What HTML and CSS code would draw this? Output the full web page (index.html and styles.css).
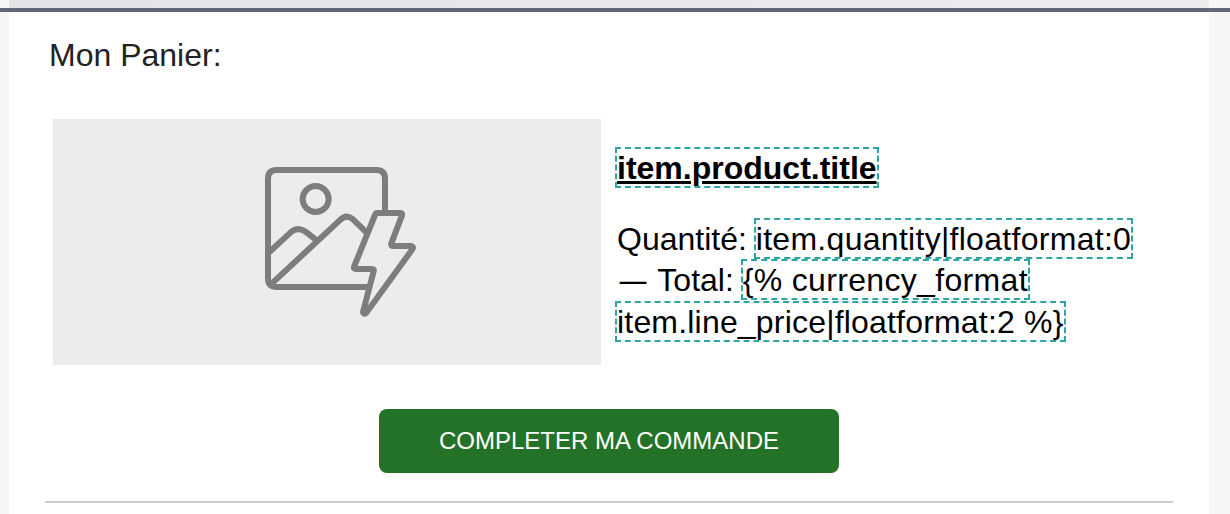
FILE: index.html
```html
<!DOCTYPE html>
<html lang="fr">

<head>
    <meta charset="UTF-8">
    <meta name="viewport" content="width=device-width, initial-scale=1.0">
    <title>Mon Panier</title>
    <link rel="stylesheet" href="styles.css">
</head>

<body>
    <div class="top-strip"></div>
    <div class="divider-bar"></div>
    <div class="panel">
        <h1>Mon Panier:</h1>
        <div class="item">
            <div class="item-image">
                <svg viewBox="0 0 540 540" width="180" height="180">
                    <g fill="none" stroke="#7c7d7e" stroke-width="18" stroke-linejoin="round">
                        <path d="M405 184V86Q405 60 379 60H80Q54 60 54 86V385Q54 411 80 411H358" />
                        <circle cx="197" cy="147" r="39" />
                        <path d="M55 309L122 247Q144 228 168 246L200 271" />
                        <path d="M65 401L269 211Q289 190 309 208L350 248" />
                        <path d="M382 189H451Q458 189 456 196L424 280Q422 288 430 288H483Q492 289 487 298L350 487Q345 493 341 490Q338 488 340 482L371 364Q373 357 366 357H319Q309 357 313 348L375 195Q377 189 382 189Z" />
                    </g>
                </svg>
            </div>
            <div class="item-text">
                <p class="title"><span class="tag">item.product.title</span></p>
                <p>
                    Quantité: <span class="tag quantity">item.quantity|floatformat:0</span><br>
                    <span class="dash">—</span> Total: <span class="tag currency">{% currency_format</span><br>
                    <span class="tag price">item.line_price|floatformat:2 %}</span>
                </p>
            </div>
        </div>
        <a class="button" href="#">COMPLETER MA COMMANDE</a>
        <hr>
    </div>
</body>

</html>
```

FILE: styles.css
```css
body {
    font-family: "Liberation Sans", Arial, sans-serif;
    font-size: 32px;
    background-color: #f6f6f6;
    color: #000;
    margin: 0;
    height: 514px;
    overflow: hidden;
}

.top-strip {
    width: 1200px;
    height: 8px;
    margin-left: 9px;
    background: linear-gradient(to right, #e2e3e8, #ebecef);
}

.divider-bar {
    height: 4px;
    background-color: #5f6974;
}

.panel {
    box-sizing: border-box;
    width: 1200px;
    height: 502px;
    margin-left: 9px;
    padding: 22px 36px 0;
    background-color: #fff;
}

h1 {
    margin: 0 0 43px 4px;
    font-size: 32px;
    font-weight: normal;
    line-height: 42px;
    color: #222;
}

.item {
    display: flex;
    height: 246px;
    margin-left: 8px;
}

.item-image {
    box-sizing: border-box;
    width: 548px;
    padding: 31px 0 0 197px;
    background-color: #ebecee;
}

.item-image svg {
    display: block;
}

.item-text {
    padding: 29px 0 0 16px;
    line-height: 41.6px;
    white-space: nowrap;
}

.item-text p {
    margin: 0;
}

.item-text .title {
    margin-bottom: 29px;
    font-weight: bold;
    text-decoration: underline;
}

.tag {
    padding-top: 1px;
    outline: 2px dashed #2ca5a3;
}

.quantity {
    letter-spacing: 0.29px;
}

.currency {
    letter-spacing: 0.33px;
}

.price {
    letter-spacing: 0.19px;
}

.dash {
    margin: 0 1.5px;
    font-family: "Noto Sans", sans-serif;
    font-size: 29px;
    line-height: 1;
}

.button {
    display: block;
    width: 460px;
    margin: 44px auto 28px;
    border-radius: 8px;
    background-color: #247227;
    color: #fff;
    font-size: 24px;
    line-height: 64px;
    text-align: center;
    text-decoration: none;
}

hr {
    height: 2px;
    margin: 0;
    border: none;
    background-color: #ccc;
}
```
